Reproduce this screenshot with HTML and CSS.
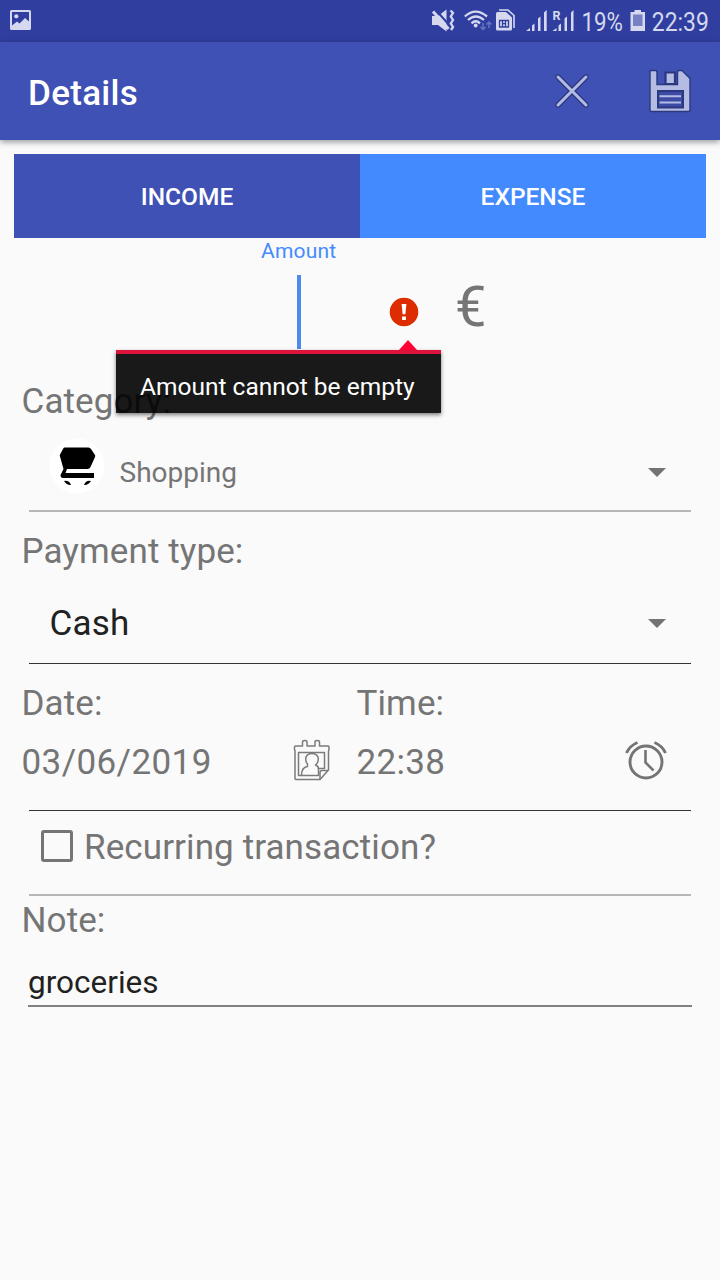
FILE: index.html
```html
<!DOCTYPE html>
<html lang="en">
<head>
<meta charset="utf-8">
<title>Details</title>
<link rel="stylesheet" href="styles.css">
</head>
<body>
<header class="status">
  <svg class="status-picture" width="22" height="20" viewBox="0 0 22 20"><path fill="#d5d8ee" fill-rule="evenodd" d="M1.5 0H19.5Q21 0 21 1.5V18.5Q21 20 19.5 20H1.5Q0 20 0 18.5V1.5Q0 0 1.5 0ZM2 2V15.5L7 11.5L9.5 13.5L15 8L19 11.5V2Z"/><circle cx="6.3" cy="6.3" r="2.1" fill="#d5d8ee"/></svg>
  <div class="status-right">
    <svg width="30" height="42" viewBox="430 0 30 42"><path fill="#d5d8ee" d="M432 16H438L446.500 9.500V31.500L438 25H432Z"/><path d="M434 8L451 27" stroke="#303f9f" stroke-width="2"/><path d="M433 11.500L448.500 29" stroke="#d5d8ee" stroke-width="3"/><path d="M450.500 10.500L453 13L450.800 16.500L453 20L450.800 23.500L453 27L451 30" fill="none" stroke="#d5d8ee" stroke-width="2.300"/></svg>
    <svg width="34" height="42" viewBox="460 0 34 42"><g fill="none" stroke="#d5d8ee" stroke-width="2.300"><path d="M464.800 16.500Q475.500 6.800 487 16.500"/><path d="M468 20Q475.800 13 484 20"/><path d="M471.500 23.300Q475.800 19.300 480 23.300"/></g><circle cx="475.700" cy="25.500" r="1.900" fill="#d5d8ee"/><path fill="none" stroke="#6873c0" stroke-width="1.500" d="M483 23V29M480.500 27L483 29.500L485.500 27M489 28V22M486.500 24.500L489 22L491.500 24.500"/></svg>
    <svg width="26" height="42" viewBox="494 0 26 42"><path fill="none" stroke="#d5d8ee" stroke-width="1.600" d="M499 10H508L514 15.500V28"/><path fill="#d5d8ee" d="M497.500 12H506L512 17.500V29Q512 30.500 510.500 30.500H497.500Q496 30.500 496 29V13.500Q496 12 497.500 12Z"/><path fill="none" stroke="#303f9f" stroke-width="1.300" d="M499.500 20.500H508.500V27H499.500ZM502.500 20.500V27M505.500 20.500V27M502.500 23.700H505.500"/></svg>
    <svg width="60" height="42" viewBox="520 0 60 42"><path fill="#d5d8ee" d="M526 31L530 28V31ZM532 25.500L534.500 23.500V31H532ZM538 18.500L540.500 16.500V31H538ZM544 12.500L546.700 10V31H544ZM552.500 31L556.500 28V31ZM558.500 25.500L561 23.500V31H558.500ZM564.500 18.500L567 16.500V31H564.500ZM571 12.500L573.500 10V31H571Z"/><text x="552.500" y="20" font-size="12.500" font-weight="700" textLength="8" lengthAdjust="spacingAndGlyphs" fill="#d5d8ee">R</text></svg>
    <svg width="48" height="42" viewBox="580 0 48 42"><text x="581.500" y="30.500" font-size="25" textLength="41.500" lengthAdjust="spacingAndGlyphs" fill="#d5d8ee">19%</text></svg>
    <svg width="22" height="42" viewBox="628 0 22 42"><path fill="#d5d8ee" d="M634.500 10H641V12H645V31H630.500V12H634.500Z"/><path fill="#7680c2" d="M633 14.500H642.500V26H633Z"/></svg>
    <svg width="70" height="42" viewBox="650 0 70 42"><text x="651.800" y="30.500" font-size="25" textLength="57" lengthAdjust="spacingAndGlyphs" fill="#d5d8ee">22:39</text></svg>
  </div>
</header>
<div class="appbar">
  <h1 class="title">Details</h1>
  <svg class="close" width="36" height="36" viewBox="0 0 36 36"><path d="M4 4L32 32M32 4L4 32" stroke="#2b387f" stroke-width="5.400" stroke-linecap="round"/><path d="M4 4L32 32M32 4L4 32" stroke="#b4bce3" stroke-width="3" stroke-linecap="round"/></svg>
  <svg class="save" width="42" height="44" viewBox="0 0 42 44"><g stroke="#2b387f" stroke-width="1.400"><path fill="#b4bce3" d="M2 1.500H6.500Q8 1.500 8 3V15.500H28.500V3Q28.500 1.500 30 1.500H33L41 9.500V41Q41 42.500 39.500 42.500H2.500Q1 42.500 1 41V2.500Q1 1.500 2 1.500Z"/><path fill="#b4bce3" stroke-width="2.200" d="M16.500 3.500H26V15H16.500Z"/><path fill="#3c4ca6" stroke-width="2" d="M9 22H34V38.500H9Z"/></g><path d="M10.500 27.200H32M10.500 33.500H32" stroke="#b4bce3" stroke-width="2"/></svg>
</div>
<main class="form">
  <div class="tabs"><div class="tab">INCOME</div><div class="tab tab-active">EXPENSE</div></div>
  <section class="amount">
    <div class="amount-label">Amount</div>
    <div class="amount-row">
      <div class="caret"></div>
      <svg class="alert" width="30" height="30" viewBox="0 0 30 30"><circle cx="15" cy="15" r="14.300" fill="#dd2c00"/><path fill="#fff" d="M12.600 7H17.400L16.400 17.200H13.600ZM13.100 19.500H16.900V23H13.100Z"/></svg>
      <div class="currency">€</div>
    </div>
    <div class="popup"><svg class="popup-arrow" width="18" height="10" viewBox="0 0 18 10"><path d="M9 0L18 10H0Z" fill="#ff0033"/></svg>Amount cannot be empty</div>
  </section>
  <div class="label label-category">Category:</div>
  <div class="select select-category">
    <svg class="shop" width="56" height="56" viewBox="0 0 56 56"><circle cx="28" cy="28" r="27.500" fill="#fff"/><path d="M15.500 9.500H39.500Q41 9.500 42 11L46 17Q46.500 18 46 19L41.500 29Q40.500 31 38.500 31H18L16.500 35H45V40H14Q11.500 40 11.500 37L14.500 31L11 18.500Q10.500 17.500 11 16.500L14 11Q14.500 9.500 15.500 9.500Z"/><path d="M15 43Q20 42 22 47Q18 47.500 15 43ZM42 43Q37 42 35 47Q39 47.500 42 43Z"/></svg>
    <span class="shopping">Shopping</span>
    <svg class="arrow" width="18" height="9" viewBox="0 0 18 9"><path d="M0 0H18L9 9Z" fill="#737373"/></svg>
  </div>
  <div class="label label-payment">Payment type:</div>
  <div class="select select-payment"><span class="cash">Cash</span><svg class="arrow" width="18" height="9" viewBox="0 0 18 9"><path d="M0 0H18L9 9Z" fill="#737373"/></svg></div>
  <div class="datetime">
    <div class="label">Date:</div><div class="label">Time:</div>
    <div class="value"><span class="date">03/06/2019</span>
      <svg class="calendar" width="38" height="44" viewBox="0 0 38 44"><g fill="none" stroke="#7b7b7b" stroke-width="1.500" stroke-linejoin="round"><path d="M1.500 8Q1.500 7 2.500 7H9.500V3Q9.500 1.500 12 1.500Q14 1.500 14 3V7H22V3Q22 1.500 24 1.500Q26.500 1.500 26.500 3V7H35Q36 7 36 8V10.500L35.500 12V31L27 40.500H3Q2 40.500 2 39.500V12L1.500 10.500Z"/><path d="M25.500 29.500V36.500H5.500V13.500H31.500V29.500H25.500"/><path d="M8.500 36Q8.500 28.500 14.500 27.500V25Q12 22 13 18Q14.500 14.500 19 14.500Q23.500 14.500 25 18Q26 22 23.500 25L22.500 26Q25.500 27 25.500 30"/><path d="M27 40V33.500Q27 31.500 29 31.500H35"/></g></svg>
    </div>
    <div class="value"><span>22:38</span>
      <svg class="alarm" width="42" height="40" viewBox="0 0 42 40"><g fill="none" stroke="#747474" stroke-width="2.900"><circle cx="21" cy="22" r="16"/><path d="M1.500 13Q4.500 6 12.500 2.500M40.500 13Q37.500 6 29.500 2.500"/><path stroke-width="2.600" d="M20.500 10V22.500L28.500 30.500"/></g></svg>
    </div>
  </div>
  <label class="recurring"><span class="box"></span>Recurring transaction?</label>
  <div class="label label-note">Note:</div>
  <div class="note">groceries</div>
</main>
</body>
</html>
```

FILE: styles.css
```css
* { box-sizing: border-box; }
body { margin: 0; width: 720px; height: 1280px; overflow: hidden; background: #fafafa; color: #757575; font-family: Roboto, sans-serif; font-size: 35px; }
svg { display: block; flex: none; }
.status { height: 42px; display: flex; justify-content: space-between; align-items: flex-start; background: #303f9f; }
.status-picture { margin: 10px 0 0 10px; }
.status-right { display: flex; }
.appbar { height: 98px; display: flex; align-items: center; padding: 0 28px; background: #3f51b5; box-shadow: 0 2px 6px rgba(0,0,0,.4); }
.title { margin: 4px auto 0 0; font-size: 35px; font-weight: 500; letter-spacing: .3px; color: #fff; }
.close { margin-right: 59px; }
.save { margin-right: 1px; }
.form { padding: 14px 14px 0; }
.tabs { height: 84px; display: flex; }
.tab { flex: 1; background: #3f51b5; color: #fff; font-size: 24.5px; font-weight: 500; line-height: 86px; text-align: center; }
.tab-active { background: #448aff; }
.amount { position: relative; height: 138px; }
.amount-label { padding-left: 247px; font-size: 21px; line-height: 26px; letter-spacing: .2px; color: #448aff; }
.amount-row { display: flex; align-items: flex-start; padding: 11px 0 0 283px; }
.caret { width: 4px; height: 74px; background: #4d8aef; }
.alert { margin: 22px 0 0 88px; }
.currency { margin: -1px 0 0 36px; font-size: 56px; line-height: 66px; }
.popup { position: absolute; left: 102px; top: 112px; width: 325px; height: 63px; border-top: 4px solid #dc143c; background: rgba(0,0,0,.9); background-clip: padding-box; box-shadow: 0 2px 4px rgba(0,0,0,.5); color: #fff; font-size: 24.5px; line-height: 65px; padding-left: 24px; white-space: nowrap; }
.popup-arrow { position: absolute; left: 283px; top: -14px; }
.label { line-height: 50px; padding-left: 7.5px; letter-spacing: .1px; white-space: nowrap; }
.label-category { padding-top: 1px; }
.select { display: flex; align-items: center; margin-left: 15px; width: 662px; }
.select-category { height: 85px; border-bottom: 2px solid #b7b7b7; }
.shop { margin: -6px 0 0 20px; }
.shopping { margin: 8px 0 0 14.5px; font-size: 28px; }
.arrow { margin: 7px 25px 0 auto; }
.label-payment { padding-top: 15px; }
.select-payment { height: 87px; border-bottom: 1px solid #333; color: #212121; }
.cash { padding-left: 20.5px; margin-top: 7px; letter-spacing: .2px; }
.datetime { display: grid; grid-template-columns: 335px 1fr; height: 147px; padding-top: 15px; align-content: start; position: relative; }
.datetime::after { content: ""; position: absolute; left: 15px; bottom: 0; width: 662px; height: 1px; background: #333; }
.value { display: flex; align-items: center; padding-left: 7.5px; height: 66px; letter-spacing: .3px; }
.date { letter-spacing: .4px; }
.calendar { margin: -3px 18px 0 auto; }
.alarm { margin: -5px 39px 0 auto; }
.recurring { display: flex; align-items: flex-start; height: 85px; margin-left: 15px; width: 662px; padding: 16px 0 0 12px; line-height: 41px; letter-spacing: .1px; border-bottom: 2px solid #b7b7b7; }
.box { width: 32px; height: 32px; margin: 3px 11px 0 0; border: 3.5px solid #757575; border-radius: 3px; }
.note { margin: 7px 0 0 14px; width: 664px; height: 54px; border-bottom: 2px solid #808080; color: #212121; font-size: 31.5px; line-height: 59px; }
```
